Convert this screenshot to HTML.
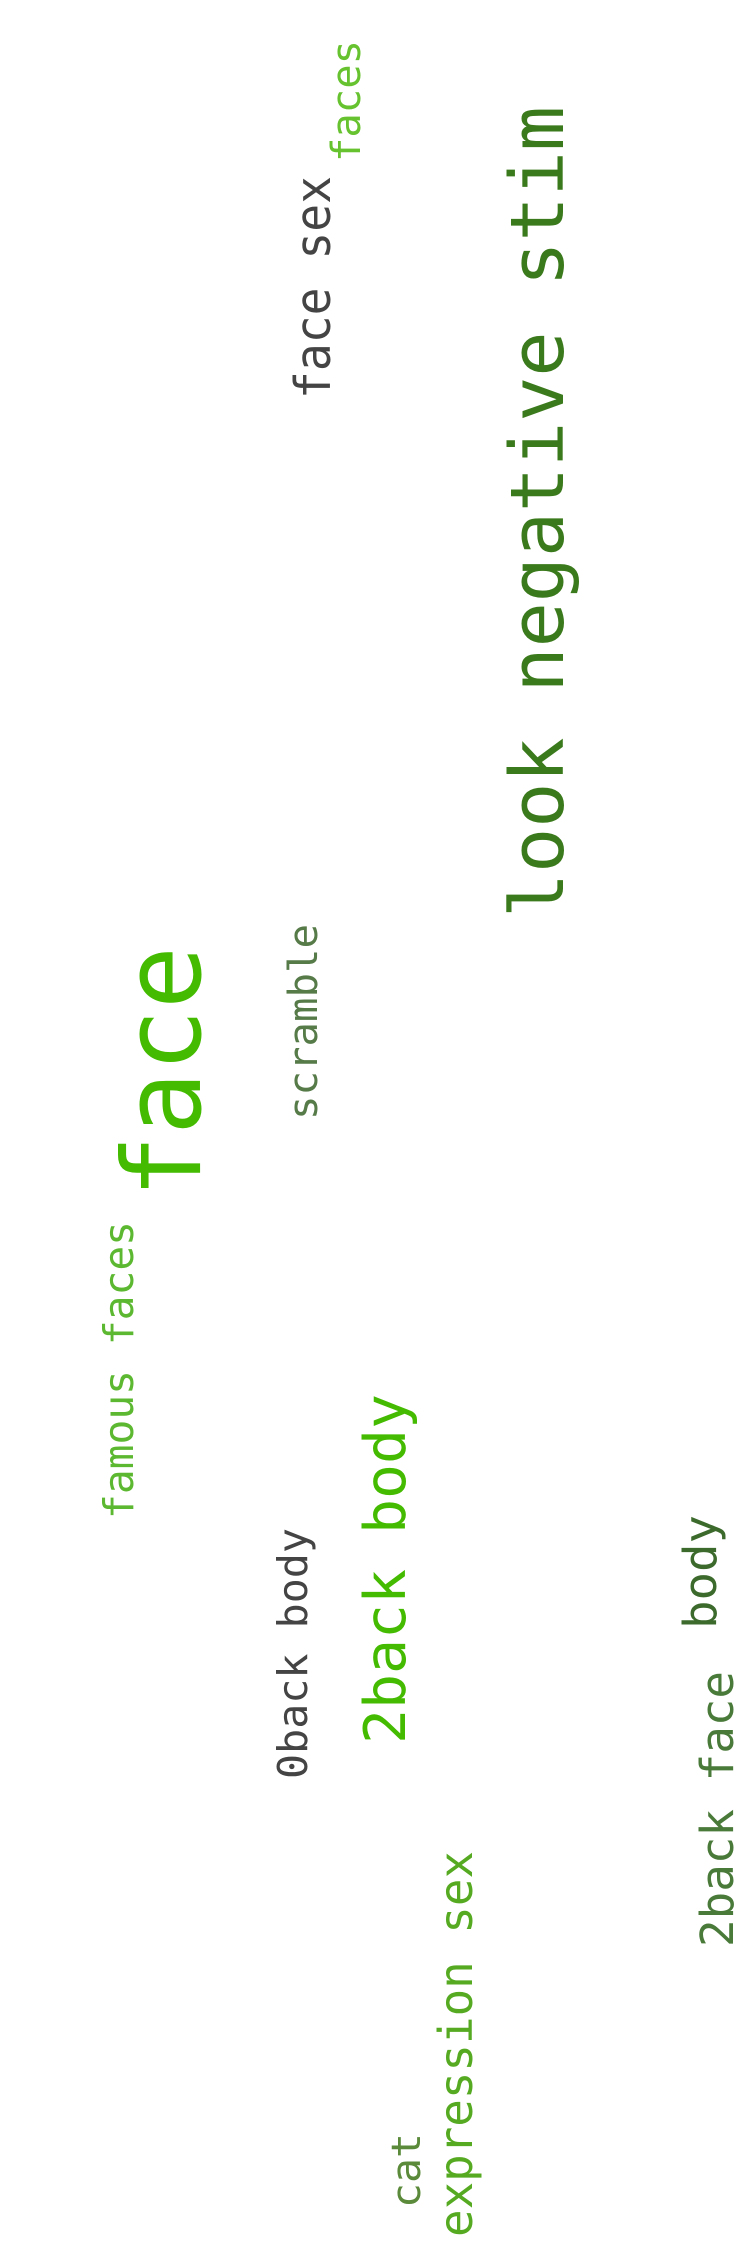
<!DOCTYPE html>
<html><head><meta charset="utf-8"><style>
html,body{margin:0;padding:0;background:#fff;}
svg{display:block;}
text{font-family:"DejaVu Sans Mono","Liberation Mono",monospace;}
</style></head><body>
<svg width="750" height="2250" viewBox="0 0 750 2250" xmlns="http://www.w3.org/2000/svg">
<text transform="translate(360,162) rotate(-90)" font-size="40" fill="#66c22e" textLength="122" lengthAdjust="spacingAndGlyphs">faces</text>
<text transform="translate(330,399) rotate(-90)" font-size="49" fill="#444444" textLength="223" lengthAdjust="spacingAndGlyphs">face sex</text>
<text transform="translate(563,918) rotate(-90)" font-size="74" fill="#3b7a1c" textLength="812" lengthAdjust="spacingAndGlyphs">look negative stim</text>
<text transform="translate(200,1198) rotate(-90)" font-size="108" fill="#44bb00" textLength="252" lengthAdjust="spacingAndGlyphs">face</text>
<text transform="translate(317,1120) rotate(-90)" font-size="40" fill="#567a48" textLength="196" lengthAdjust="spacingAndGlyphs">scramble</text>
<text transform="translate(133,1519) rotate(-90)" font-size="41" fill="#5cb830" textLength="298" lengthAdjust="spacingAndGlyphs">famous faces</text>
<text transform="translate(307,1779) rotate(-90)" font-size="41" fill="#444444" textLength="251" lengthAdjust="spacingAndGlyphs">0back body</text>
<text transform="translate(405,1744) rotate(-90)" font-size="57" fill="#44bb00" textLength="350" lengthAdjust="spacingAndGlyphs">2back body</text>
<text transform="translate(716,1629) rotate(-90)" font-size="45" fill="#3c6a2c" textLength="114" lengthAdjust="spacingAndGlyphs">body</text>
<text transform="translate(733,1947) rotate(-90)" font-size="45" fill="#4a7a3a" textLength="276" lengthAdjust="spacingAndGlyphs">2back face</text>
<text transform="translate(472,2237) rotate(-90)" font-size="46" fill="#55aa22" textLength="386" lengthAdjust="spacingAndGlyphs">expression sex</text>
<text transform="translate(420,2208) rotate(-90)" font-size="40" fill="#5a8a3a" textLength="75" lengthAdjust="spacingAndGlyphs">cat</text>
</svg>
</body></html>
